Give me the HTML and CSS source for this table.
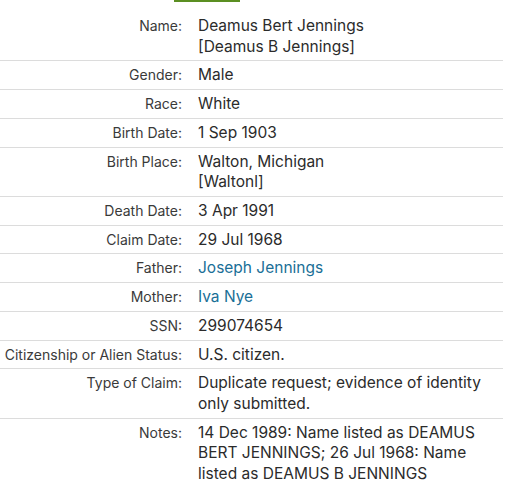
FILE: index.html
```html
<!DOCTYPE html>
<html lang="en">
<head>
<meta charset="utf-8">
<title>Record</title>
<link rel="stylesheet" href="styles.css">
</head>
<body>
<div class="tabbar"><span class="tab-active"></span></div>
<div class="record">
  <div class="row"><div class="label">Name:</div><div class="value">Deamus Bert Jennings<br>[Deamus B Jennings]</div></div>
  <div class="row"><div class="label">Gender:</div><div class="value">Male</div></div>
  <div class="row"><div class="label">Race:</div><div class="value">White</div></div>
  <div class="row"><div class="label">Birth Date:</div><div class="value">1 Sep 1903</div></div>
  <div class="row"><div class="label">Birth Place:</div><div class="value">Walton, Michigan<br>[Waltonl]</div></div>
  <div class="row"><div class="label">Death Date:</div><div class="value">3 Apr 1991</div></div>
  <div class="row"><div class="label">Claim Date:</div><div class="value">29 Jul 1968</div></div>
  <div class="row"><div class="label">Father:</div><div class="value"><a class="link" href="#">Joseph Jennings</a></div></div>
  <div class="row"><div class="label">Mother:</div><div class="value"><a class="link" href="#">Iva Nye</a></div></div>
  <div class="row"><div class="label">SSN:</div><div class="value">299074654</div></div>
  <div class="row"><div class="label">Citizenship or Alien Status:</div><div class="value">U.S. citizen.</div></div>
  <div class="row"><div class="label">Type of Claim:</div><div class="value">Duplicate request; evidence of identity only submitted.</div></div>
  <div class="row last"><div class="label">Notes:</div><div class="value">14 Dec 1989: Name listed as DEAMUS BERT JENNINGS; 26 Jul 1968: Name listed as DEAMUS B JENNINGS</div></div>
</div>
</body>
</html>
```
FILE: styles.css
```css
html, body {
  margin: 0;
  padding: 0;
  background: #fff;
}
body {
  font-family: Inter, "Noto Sans", sans-serif;
  color: #333;
  width: 503px;
}
.tabbar {
  height: 12px;
}
.tab-active {
  display: block;
  margin-left: 174px;
  width: 66px;
  height: 2px;
  background: #5b8f22;
}
.record {
  display: flex;
  flex-direction: column;
}
.row {
  display: grid;
  grid-template-columns: 182px 1fr;
  column-gap: 16px;
  align-items: baseline;
  padding: 4px 0 3.25px;
  border-bottom: 1px solid #dcdcdc;
}
.row.last {
  border-bottom: none;
}
.label {
  text-align: right;
  font-size: 14px;
  line-height: 20.5px;
  color: #3a3a3a;
}
.value {
  font-size: 15.5px;
  line-height: 20.5px;
  color: #2b2b2b;
  padding-right: 20px;
}
.link {
  color: #1a6f97;
  text-decoration: none;
}
```
